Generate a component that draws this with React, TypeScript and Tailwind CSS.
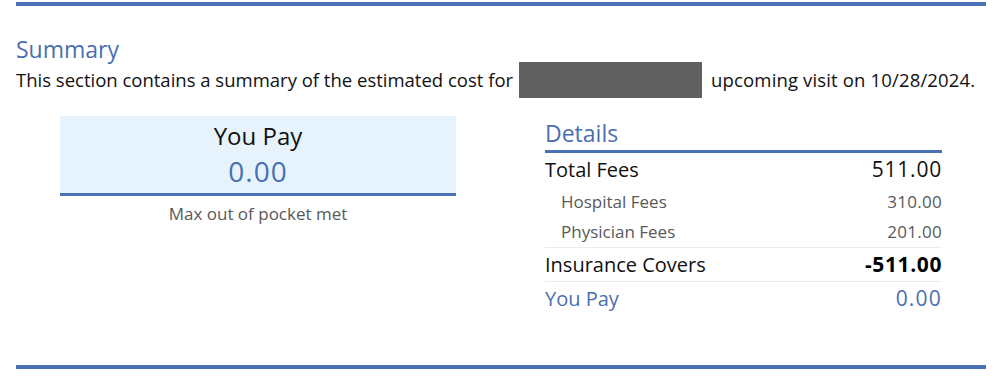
const font = { fontFamily: '"Open Sans", "Noto Sans", sans-serif' };

type Row = {
  label: string;
  amount: string;
  kind: "main" | "sub" | "bold" | "total";
  divider?: boolean;
};

const rows: Row[] = [
  { label: "Total Fees", amount: "511.00", kind: "main" },
  { label: "Hospital Fees", amount: "310.00", kind: "sub" },
  { label: "Physician Fees", amount: "201.00", kind: "sub", divider: true },
  { label: "Insurance Covers", amount: "-511.00", kind: "bold", divider: true },
  { label: "You Pay", amount: "0.00", kind: "total" },
];

function DetailRow({ row }: { row: Row }) {
  const labelClass =
    row.kind === "sub"
      ? "pl-[16px] text-[17px] text-[#595959]"
      : row.kind === "total"
        ? "text-[20px] text-[#4a6fb0]"
        : "text-[20px] text-[#111]";
  const amountClass =
    row.kind === "sub"
      ? "text-[17px] tracking-[0.3px] text-[#595959]"
      : row.kind === "bold"
        ? "text-[21px] tracking-[0.6px] font-bold text-black"
        : row.kind === "total"
          ? "text-[21px] tracking-[1.2px] text-[#4a6fb0]"
          : "text-[21px] tracking-[0.8px] text-[#111]";
  const height =
    row.kind === "sub" ? "h-[31px]" : row.kind === "bold" ? "h-[34px]" : "h-[33px]";
  return (
    <div
      className={`flex items-center justify-between ${height} ${
        row.divider ? "border-b border-[#ececec]" : ""
      }`}
    >
      <span className={labelClass}>{row.label}</span>
      <span className={amountClass}>{row.amount}</span>
    </div>
  );
}

export default function App() {
  return (
    <div className="w-[1000px] h-[389px] bg-white pt-[2px]" style={font}>
      {/* Top rule */}
      <div className="ml-[16px] w-[970px] h-[4px] bg-[#4a70b6]" />

      {/* Header */}
      <div className="pl-[16px] pt-[30px]">
        <h2 className="text-[23px] leading-[26px] text-[#4a6fb0]">Summary</h2>
        <div className="flex items-center h-[36px] text-[18.5px] text-[#111]">
          <span>This section contains a summary of the estimated cost for</span>
          <span className="ml-[6px] w-[183px] h-[36px] bg-[#606060]" />
          <span className="ml-[9px] tracking-[0.15px]">upcoming visit on 10/28/2024.</span>
        </div>
      </div>

      {/* Body */}
      <div className="flex pt-[18px]">
        <div className="ml-[60px] w-[396px]">
          <div className="bg-[#e7f3fc] border-b-[3px] border-[#4a70b6] h-[80px] flex flex-col items-center pt-[3px]">
            <div className="text-[24px] leading-[33px] text-[#111]">You Pay</div>
            <div className="text-[28px] leading-[38px] tracking-[1px] text-[#4a6fb0]">0.00</div>
          </div>
          <div className="text-center text-[17px] leading-[24px] text-[#595959] mt-[6px]">
            Max out of pocket met
          </div>
        </div>

        <div className="ml-[89px] w-[397px]">
          <div className="text-[23px] leading-[34px] h-[34px] text-[#4a6fb0]">Details</div>
          <div className="h-[3px] bg-[#4a70b6]" />
          {rows.map((r) => (
            <DetailRow key={r.label} row={r} />
          ))}
        </div>
      </div>

      {/* Bottom rule */}
      <div className="ml-[16px] mt-[50px] w-[970px] h-[4px] bg-[#4a70b6]" />
    </div>
  );
}
